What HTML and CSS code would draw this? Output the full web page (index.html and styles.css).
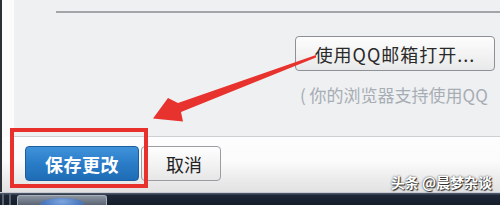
FILE: index.html
```html
<!DOCTYPE html>
<html lang="zh">
<head>
<meta charset="utf-8">
<link rel="stylesheet" href="styles.css">
</head>
<body>
<div class="screen">
  <div class="main">
    <div class="edge"></div>
    <div class="content">
      <div class="panel">
        <div class="rule"></div>
        <div class="actions">
          <button class="btn open">使用QQ邮箱打开...</button>
          <div class="note">( 你的浏览器支持使用QQ</div>
        </div>
      </div>
      <div class="footer">
        <button class="btn save">保存更改</button>
        <button class="btn cancel">取消</button>
        <div class="watermark">头条 @晨梦杂谈</div>
      </div>
    </div>
  </div>
  <div class="taskbar">
    <div class="seps"><span></span><span></span></div>
    <div class="task"><div class="glow"></div></div>
  </div>
  <div class="highlight"></div>
  <svg class="arrow" width="500" height="205" viewBox="0 0 500 205">
    <polygon points="316,55 178,103 168,98 153,118.5 183,121.5 181,112 316,57.5" fill="#e8322e"/>
  </svg>
</div>
</body>
</html>
```
FILE: styles.css
```css
* { box-sizing: border-box; }
html, body { margin: 0; padding: 0; }
body {
  width: 500px;
  height: 205px;
  overflow: hidden;
  font-family: "Noto Sans CJK SC", "Noto Sans", sans-serif;
}
.screen {
  position: relative;
  width: 500px;
  height: 205px;
  display: flex;
  flex-direction: column;
  overflow: hidden;
}
.main {
  height: 192px;
  display: flex;
}
.edge {
  width: 2px;
  background: #2b3036;
}
.content {
  flex: 1;
  display: flex;
  flex-direction: column;
  background: #fbfbfb;
}
.panel {
  height: 137px;
  margin-left: 12px;
  background: #eff0f2;
  border-bottom: 1px solid #cdd0d3;
  overflow: hidden;
}
.rule {
  margin-left: 42px;
  margin-top: 11px;
  height: 2px;
  background: #a3a5a8;
}
.actions {
  display: flex;
  flex-direction: column;
  align-items: flex-start;
  padding-left: 281px;
  margin-top: 23px;
}
.btn {
  font-family: "Noto Sans CJK SC", "Noto Sans", sans-serif;
  height: 35px;
  border-radius: 4px;
  padding: 0;
  line-height: 1;
  cursor: pointer;
}
.open {
  width: 200px;
  font-size: 18px;
  color: #2a2a2a;
  border: 1px solid #8d9094;
  background: linear-gradient(#fdfdfd, #f3f3f3 50%, #e8e9ea);
  letter-spacing: 1px;
}
.note {
  margin-top: 14px;
  margin-left: 5px;
  font-size: 17px;
  color: #a7adb4;
  white-space: nowrap;
  line-height: 20px;
}
.footer {
  position: relative;
  flex: 1;
  display: flex;
  align-items: flex-start;
  gap: 2px;
  padding-top: 9px;
  padding-left: 23px;
  background: linear-gradient(#fdfdfd 0%, #fbfbfb 45%, #ececec 75%, #e2e2e2 100%);
}
.save {
  width: 114px;
  font-size: 18px;
  font-weight: bold;
  color: #fff;
  border: 1px solid #1b5d9e;
  background: linear-gradient(#3f93da, #2a7cc7 50%, #1f6cb6);
  letter-spacing: 0.5px;
}
.cancel {
  width: 80px;
  font-size: 18px;
  color: #222;
  border: 1px solid #9a9da1;
  background: linear-gradient(#fefefe, #f2f2f2 55%, #e6e6e6);
  padding-left: 6px;
}
.watermark {
  position: absolute;
  right: 8px;
  bottom: 1px;
  font-size: 14px;
  color: #fff;
  font-weight: bold;
  text-shadow: 0 0 2px #333, 1px 1px 1px #222;
  white-space: nowrap;
  line-height: 17px;
}
.taskbar {
  flex: 1;
  display: flex;
  align-items: flex-end;
  gap: 4px;
  background: linear-gradient(#4a5566 0px, #4a5566 1px, #1e2838 2px, #151d2a 100%);
  border-top: 1px solid #c8ccd2;
  padding-left: 2px;
}
.seps {
  display: flex;
  gap: 5px;
  height: 11px;
  align-self: flex-end;
}
.seps span {
  width: 2px;
  background: #5a626e;
}
.task {
  width: 90px;
  height: 10px;
  margin-left: 2px;
  border: 1px solid #a9b1bb;
  border-bottom: none;
  border-radius: 3px 3px 0 0;
  background: linear-gradient(#8a94a1, #5a6474);
  display: flex;
  justify-content: center;
  overflow: hidden;
}
.glow {
  width: 44px;
  height: 12px;
  margin-top: 2px;
  border-radius: 50% 50% 0 0;
  background: radial-gradient(ellipse at 50% 30%, #7ea6df, #4a78bd 60%, rgba(74,120,189,0) 100%);
}
.highlight {
  position: absolute;
  left: 10px;
  top: 128px;
  width: 138px;
  height: 60px;
  border: 4px solid #e8302c;
}
.arrow {
  position: absolute;
  left: 0;
  top: 0;
  pointer-events: none;
}
```
